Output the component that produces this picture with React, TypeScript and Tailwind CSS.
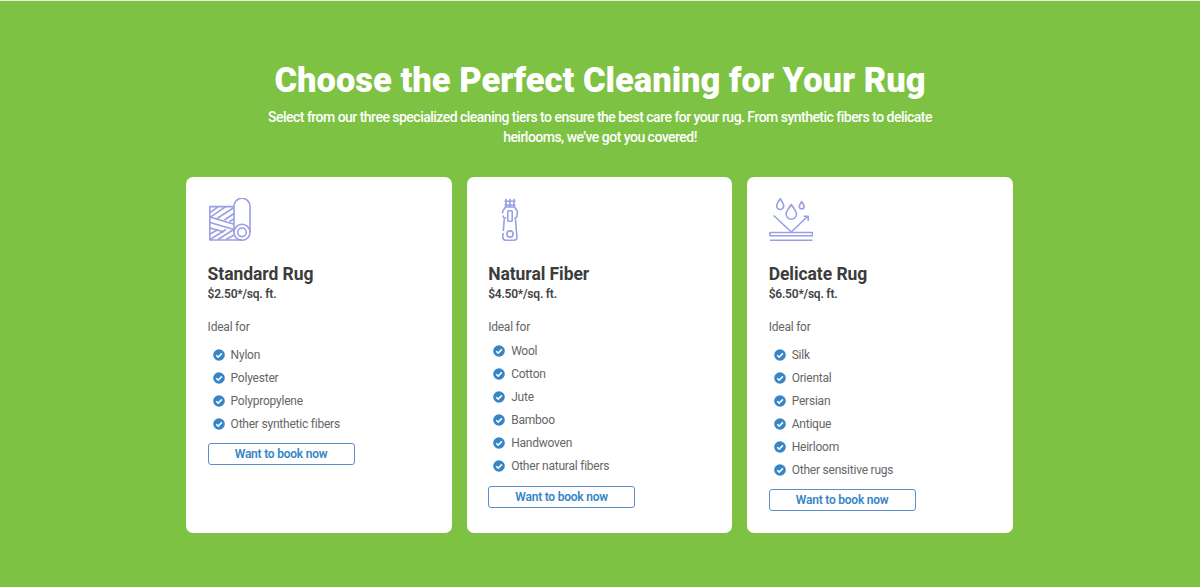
import type { ReactNode } from 'react';

interface Tier {
    name: string;
    price: string;
    icon: ReactNode;
    items: string[];
    listClass: string;
    buttonClass: string;
}

const iconProps = {
    width: 44,
    height: 44,
    viewBox: '0 0 44 44',
    fill: 'none',
    stroke: '#9a9fe4',
    strokeWidth: 1.6,
    strokeLinejoin: 'round' as const,
};

const RugIcon = () => (
    <svg {...iconProps}>
        <path d="M26 8.6H1.8V42H34" />
        <path d="M26 34.5V8.3a8 8 0 0 1 16 0v26" />
        <circle cx="34" cy="34.3" r="8" />
        <circle cx="34" cy="34.3" r="4.3" />
        <path d="M2 14.5L10 8.8M2 19.3L17.5 8.8M9 20.5L26 9.5M16.5 22L26 15.5" />
        <path d="M2 19L26 26.3M2 24.5L26 31.5M2 30L16 34M26 21L21.5 23.5" />
        <path d="M2 36L10 31.8M2 41.5L18 31.5M10 41.5L25 32M18 41.5L26 37" />
    </svg>
);

const ZipperIcon = () => (
    <svg {...iconProps}>
        <path d="M18 .8V9M22 .8V9M26 .8V9M16.5 3.3H27.5M16.5 7H27.5" />
        <path d="M17.5 9h9l3 4.5-.7 5.5-2.3 1.5M17.5 9l-3 4.5.2 2M15 17.5l.6 2 2.6.8" />
        <rect x="19.8" y="12.8" width="4.4" height="10.5" rx=".8" />
        <path d="M16.3 20.8L15.3 33M15 35L14.8 39c0 2 1.2 3.2 3 3.2h8c2 0 3.3-1.2 3.1-3.2L27.4 20.5" />
        <circle cx="22" cy="36" r="3.1" />
    </svg>
);

const DropsIcon = () => (
    <svg {...iconProps}>
        <path d="M11.2.8C9.5 3.4 7.7 5.6 7.7 8a3.5 3.5 0 0 0 7 0c0-2.4-1.8-4.6-3.5-7.2z" />
        <path d="M22.3 6.5c-2.2 3.7-5.2 6.4-5.2 9.6a5.2 5.2 0 0 0 10.4 0c0-3.2-3-5.9-5.2-9.6z" />
        <path d="M32.7 3.6c-1.2 1.8-2.4 3.2-2.4 4.9a2.4 2.4 0 0 0 4.8 0c0-1.7-1.2-3.1-2.4-4.9z" />
        <path d="M4.7 17.5L22.3 34L39 18M34.5 18.2H39.2V23" />
        <path d="M1 34.5H43.5V37.8H1z" />
        <path d="M1 42.3H43.5" />
    </svg>
);

const CheckIcon = () => (
    <svg width="12" height="12" viewBox="0 0 12 12" fill="none" className="shrink-0">
        <circle cx="6" cy="6" r="5.8" fill="#3685c6" />
        <path d="M3.2 6.2L5.2 8.1L8.9 4.4" stroke="#fff" strokeWidth="1.5" />
    </svg>
);

const tiers: Tier[] = [
    {
        name: 'Standard Rug',
        price: '$2.50*/sq. ft.',
        icon: <RugIcon />,
        items: ['Nylon', 'Polyester', 'Polypropylene', 'Other synthetic fibers'],
        listClass: 'mt-2',
        buttonClass: 'mt-2',
    },
    {
        name: 'Natural Fiber',
        price: '$4.50*/sq. ft.',
        icon: <ZipperIcon />,
        items: ['Wool', 'Cotton', 'Jute', 'Bamboo', 'Handwoven', 'Other natural fibers'],
        listClass: 'mt-1',
        buttonClass: 'mt-[9px]',
    },
    {
        name: 'Delicate Rug',
        price: '$6.50*/sq. ft.',
        icon: <DropsIcon />,
        items: ['Silk', 'Oriental', 'Persian', 'Antique', 'Heirloom', 'Other sensitive rugs'],
        listClass: 'mt-2',
        buttonClass: 'mt-2',
    },
];

const TierCard = ({ tier }: { tier: Tier }) => (
    <div className="rounded-[7px] bg-white px-[21.6px] pt-[21px] text-[12px] tracking-[-0.22px]">
        {tier.icon}
        <h3 className="mt-5 text-[17.5px] leading-6 font-bold tracking-[-0.06px] text-[#3c3c3c]">{tier.name}</h3>
        <p className="leading-[17px] font-semibold text-[#444]">{tier.price}</p>
        <p className="mt-4 leading-4 text-[#666]">Ideal for</p>
        <ul className={`pl-[5px] ${tier.listClass}`}>
            {tier.items.map(item => (
                <li key={item} className="flex h-[23px] items-center gap-[6px] text-[#666]">
                    <CheckIcon />
                    {item}
                </li>
            ))}
        </ul>
        <button
            type="button"
            className={`block h-[22px] w-[147px] rounded-[3px] border border-[#5b8fcb] leading-5 font-semibold tracking-[-0.22px] text-[#3685c6] ${tier.buttonClass}`}
        >
            Want to book now
        </button>
    </div>
);

export default function App() {
    return (
        <section className="h-[587px] border-t border-[#e6f4d7] bg-[#7dc242] pt-[57px] font-[Roboto,sans-serif]">
            <header className="text-center text-white">
                <h2 className="text-[34.5px] leading-[44px] font-black">
                    Choose the Perfect Cleaning for Your Rug
                </h2>
                <p className="mx-auto mt-[5px] w-[680px] text-[14px] leading-5 font-medium tracking-[-0.52px]">
                    Select from our three specialized cleaning tiers to ensure the best care for your rug. From synthetic fibers to delicate heirlooms, we’ve got you covered!
                </p>
            </header>
            <div className="mt-[30px] ml-[186px] grid h-[356px] w-[827px] grid-cols-3 gap-[14.6px]">
                {tiers.map(tier => (
                    <TierCard key={tier.name} tier={tier} />
                ))}
            </div>
        </section>
    );
}
